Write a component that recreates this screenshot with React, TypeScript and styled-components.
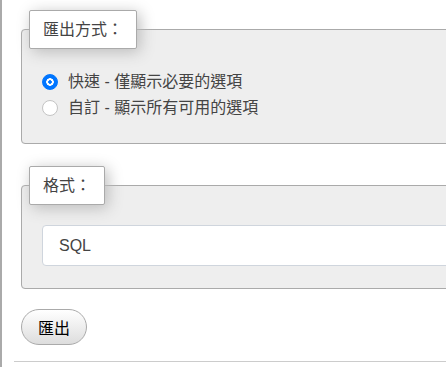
import styled, { createGlobalStyle } from 'styled-components'

const GlobalStyle = createGlobalStyle`
  *,
  *::before,
  *::after {
    box-sizing: border-box;
  }

  html,
  body {
    margin: 0;
    overflow: hidden;
    background: #fff;
    font-family: 'Liberation Sans', 'Noto Sans CJK TC', sans-serif;
    font-size: 16px;
  }
`

const exportMethods = [
  { id: 'quick', label: '快速 - 僅顯示必要的選項', checked: true },
  { id: 'custom', label: '自訂 - 顯示所有可用的選項', checked: false },
]

const App = () => {
  return (
    <>
      <GlobalStyle />
      <Page>
        <Content>
          <Fieldset>
            <Legend>匯出方式：</Legend>
            {exportMethods.map((method) => (
              <RadioRow key={method.id}>
                <Radio
                  type="radio"
                  name="export_method"
                  defaultChecked={method.checked}
                />
                <RadioLabel>{method.label}</RadioLabel>
              </RadioRow>
            ))}
          </Fieldset>

          <Fieldset $last>
            <Legend>格式：</Legend>
            <FormatSelect defaultValue="sql">
              <option value="sql">SQL</option>
            </FormatSelect>
          </Fieldset>

          <ExportButton type="button">匯出</ExportButton>
          <Divider />
        </Content>
      </Page>
    </>
  )
}

export default App

const Page = styled.div`
  display: flex;
  min-height: 100vh;
  width: 800px;
  border-left: 2px solid #aaa;
`

const Content = styled.div`
  display: flex;
  flex-direction: column;
  align-items: flex-start;
  flex: 1;
  padding: 10px 0 0 12px;
`

const Fieldset = styled.fieldset<{ $last?: boolean }>`
  align-self: stretch;
  margin: 0 0 ${(p) => (p.$last ? '20px' : '22px')} 7px;
  padding: 20px 7px 22px;
  border: 1px solid #aaa;
  border-radius: 4px;
  background: #eee;
  min-inline-size: 0;
`

const Legend = styled.legend`
  padding: 7px 13px;
  line-height: 23px;
  border: 1px solid #aaa;
  border-radius: 2px;
  background: #fff;
  box-shadow: 3px 3px 15px #bbb;
  color: #444;
`

const RadioRow = styled.label`
  display: flex;
  align-items: center;
  height: 26px;
  padding-left: 13px;
  color: #444;
  cursor: pointer;
`

const Radio = styled.input`
  appearance: none;
  flex: 0 0 16px;
  width: 16px;
  height: 16px;
  margin: 0 10px 0 0;
  border: 1px solid #c4c4c4;
  border-radius: 50%;
  background: #fff;

  &:checked {
    border-color: #0075ff;
    background: radial-gradient(
      circle,
      #0075ff 0 1.5px,
      #fff 2px 3.5px,
      #0075ff 4px
    );
  }
`

const RadioLabel = styled.span`
  line-height: 26px;
`

const FormatSelect = styled.select`
  appearance: none;
  display: block;
  width: 700px;
  height: 41px;
  margin-left: 13px;
  padding: 0 16px;
  border: 1px solid #cfd5dd;
  border-radius: 4px;
  background: #fff;
  color: #444;
  font: inherit;
`

const ExportButton = styled.button`
  height: 36px;
  margin-left: 7px;
  padding: 0 16px;
  border: 1px solid #aaa;
  border-radius: 18px;
  background: linear-gradient(#fff, #ddd);
  color: #000;
  font: inherit;
  cursor: pointer;
`

const Divider = styled.hr`
  align-self: stretch;
  height: 0;
  margin: 16px 0 0;
  border: 0;
  border-top: 1px solid #ccc;
`
